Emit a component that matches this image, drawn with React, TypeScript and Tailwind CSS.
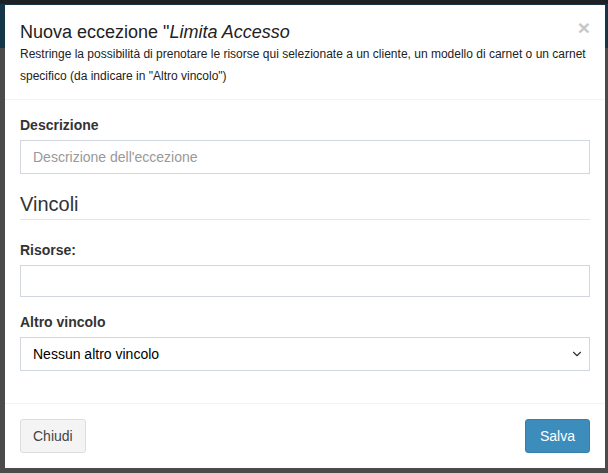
import { ChevronDown } from "lucide-react";

export default function App() {
  return (
    <div
      className="relative w-[608px] h-[473px] overflow-hidden bg-[#4b4b4b] text-[#333]"
      style={{ fontFamily: '"Liberation Sans", Arial, sans-serif' }}
    >
      {/* page behind the backdrop */}
      <div className="h-[4px] bg-[#1d2124]" />
      <div className="h-[44px] bg-[#173548]" />
      <div className="h-[425px] bg-[#4b4b4b]" />

      {/* modal */}
      <div className="absolute left-[5px] top-[5px] w-[600px] h-[463px] bg-white flex flex-col">
        <div className="px-[15px] pt-[15px] pb-[12px] border-b border-[#f4f4f4] relative">
          <button className="absolute right-[15px] top-[12px] text-[21px] leading-[21px] font-bold text-[#c7c7c7]">
            ×
          </button>
          <h4 className="text-[18px] leading-[22px] text-[#222] pt-[1px]">
            Nuova eccezione "<i>Limita Accesso</i>
          </h4>
          <p className="text-[12px] leading-[22px] text-[#222]">
            Restringe la possibilità di prenotare le risorse qui selezionate a un cliente, un
            modello di carnet o un carnet specifico (da indicare in "Altro vincolo")
          </p>
        </div>

        <div className="flex-1 px-[15px] pt-[15px]">
          <div className="mb-[15px]">
            <label className="block text-[14px] leading-[20px] font-bold mb-[5px]">Descrizione</label>
            <input
              className="w-full h-[34px] border border-[#d2d6de] px-[12px] text-[14px] outline-none placeholder:text-[#999]"
              placeholder="Descrizione dell'eccezione"
            />
          </div>

          <div className="text-[20px] leading-[30px] border-b border-[#e5e5e5] mb-[20px]">Vincoli</div>

          <div className="mb-[15px]">
            <label className="block text-[14px] leading-[20px] font-bold mb-[5px]">Risorse:</label>
            <input className="w-full h-[32px] border border-[#d2d6de] px-[12px] text-[14px] outline-none" />
          </div>

          <div>
            <label className="block text-[14px] leading-[20px] font-bold mb-[5px]">Altro vincolo</label>
            <div className="relative">
              <select className="w-full h-[34px] appearance-none border border-[#d2d6de] pl-[12px] pr-[24px] text-[14px] text-black bg-white outline-none">
                <option>Nessun altro vincolo</option>
              </select>
              <ChevronDown
                size={14}
                strokeWidth={2}
                className="absolute right-[6px] top-[10px] text-[#333] pointer-events-none"
              />
            </div>
          </div>
        </div>

        <div className="h-[65px] border-t border-[#f4f4f4] px-[15px] flex items-center justify-between">
          <button className="h-[34px] px-[12px] rounded-[3px] border border-[#ddd] bg-[#f4f4f4] text-[#444] text-[14px]">
            Chiudi
          </button>
          <button className="h-[34px] px-[14px] rounded-[3px] border border-[#367fa9] bg-[#3c8dbc] text-white text-[14px]">
            Salva
          </button>
        </div>
      </div>
    </div>
  );
}
